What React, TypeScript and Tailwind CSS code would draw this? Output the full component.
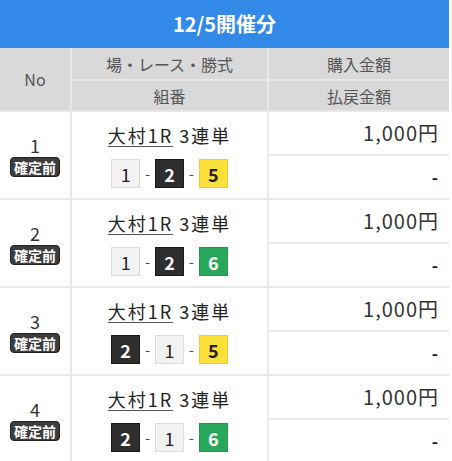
import React from 'react';

type Tone = 'white' | 'black' | 'yellow' | 'green';

interface Bet {
  no: number;
  combo: [number, Tone][];
}

const BETS: Bet[] = [
  { no: 1, combo: [[1, 'white'], [2, 'black'], [5, 'yellow']] },
  { no: 2, combo: [[1, 'white'], [2, 'black'], [6, 'green']] },
  { no: 3, combo: [[2, 'black'], [1, 'white'], [5, 'yellow']] },
  { no: 4, combo: [[2, 'black'], [1, 'white'], [6, 'green']] },
];

const TONE: Record<Tone, string> = {
  white: 'bg-[#f2f2f2] text-[#222] border-[#dcdcdc] font-normal',
  black: 'bg-[#2e2e2e] text-white border-[#1a1a1a] font-bold',
  yellow: 'bg-[#fbdf3a] text-[#222] border-[#f0d020] font-semibold',
  green: 'bg-[#27a85a] text-white border-[#1f9a4f] font-bold',
};

function Boat({ n, tone }: { n: number; tone: Tone }) {
  return (
    <span className={`w-[29px] h-[29px] flex items-center justify-center border text-[18px] leading-none ${TONE[tone]}`}>
      {n}
    </span>
  );
}

export default function App() {
  return (
    <div
      className="w-[452px] h-[461px] bg-white overflow-hidden text-[#333]"
      style={{ fontFamily: '"Noto Sans CJK JP", "Noto Sans", sans-serif' }}
    >
      <div className="w-[449px] bg-[#e8e8e8]">
        {/* title bar */}
        <div className="h-[48px] bg-[#3389e8] flex items-center justify-center text-white text-[20px] font-bold">
          12/5開催分
        </div>

        {/* column headers */}
        <div className="grid grid-cols-[70px_195px_180px] grid-rows-[31px_29px] gap-[2px] pb-[2px] text-[16px] text-[#555]">
          <div className="row-span-2 bg-[#d9d9d9] flex items-center justify-center">No</div>
          <div className="bg-[#d9d9d9] flex items-center justify-center">場・レース・勝式</div>
          <div className="bg-[#d9d9d9] flex items-center justify-center">購入金額</div>
          <div className="bg-[#d9d9d9] flex items-center justify-center">組番</div>
          <div className="bg-[#d9d9d9] flex items-center justify-center">払戻金額</div>
        </div>

        {BETS.map((bet) => (
          <div
            key={bet.no}
            className="grid grid-cols-[70px_195px_180px] grid-rows-[42px_42px] gap-[2px] pb-[2px]"
          >
            <div className="row-span-2 bg-white flex flex-col items-center justify-center">
              <span className="text-[18px] leading-[22px] text-[#333]">{bet.no}</span>
              <span className="mt-[1px] px-[3px] h-[20px] rounded-[4px] bg-[#3d3d3d] border border-[#222] text-white text-[14px] font-bold leading-none flex items-center">
                確定前
              </span>
            </div>
            <div className="row-span-2 bg-white flex flex-col items-center pt-[10px]">
              <div className="text-[18px] leading-[26px] text-[#222] tracking-[2px]">
                <span className="underline underline-offset-[3px] decoration-[#555]">大村1R</span> 3連単
              </div>
              <div className="mt-[11px] flex items-center gap-[4px]">
                {bet.combo.map(([n, tone], i) => (
                  <React.Fragment key={i}>
                    {i > 0 && <span className="text-[14px] text-[#444] px-[1px]">-</span>}
                    <Boat n={n} tone={tone} />
                  </React.Fragment>
                ))}
              </div>
            </div>
            <div className="bg-white flex items-center justify-end pr-[10px] text-[20px] tracking-[1px] text-[#333]">
              1,000円
            </div>
            <div className="bg-white flex items-center justify-end pr-[11px] text-[17px] font-bold text-[#222]">
              -
            </div>
          </div>
        ))}
      </div>
    </div>
  );
}
